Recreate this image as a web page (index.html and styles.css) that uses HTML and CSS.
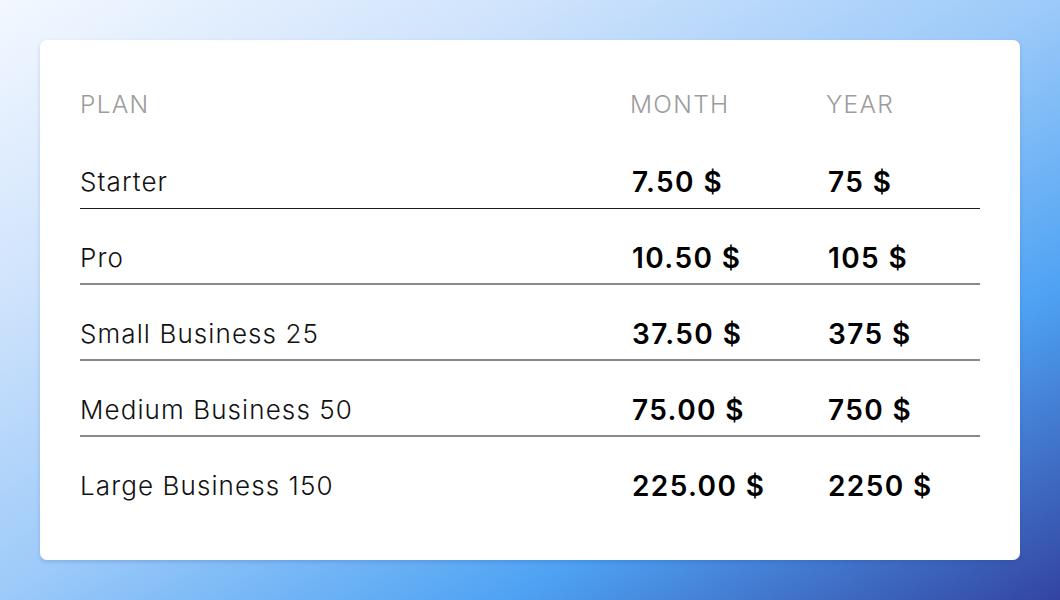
FILE: index.html
```html
<!DOCTYPE html>
<html lang="en">
<head>
<meta charset="utf-8">
<title>Pricing</title>
<link rel="stylesheet" href="styles.css">
</head>
<body>
<div class="card">
  <div class="row head">
    <div class="c plan">PLAN</div>
    <div class="c month">MONTH</div>
    <div class="c year">YEAR</div>
  </div>
  <div class="row first">
    <div class="c plan">Starter</div>
    <div class="c month val">7.50 $</div>
    <div class="c year val">75 $</div>
  </div>
  <div class="row">
    <div class="c plan">Pro</div>
    <div class="c month val">10.50 $</div>
    <div class="c year val">105 $</div>
  </div>
  <div class="row">
    <div class="c plan">Small Business 25</div>
    <div class="c month val">37.50 $</div>
    <div class="c year val">375 $</div>
  </div>
  <div class="row">
    <div class="c plan">Medium Business 50</div>
    <div class="c month val">75.00 $</div>
    <div class="c year val">750 $</div>
  </div>
  <div class="row last">
    <div class="c plan">Large Business 150</div>
    <div class="c month val">225.00 $</div>
    <div class="c year val">2250 $</div>
  </div>
</div>
</body>
</html>
```
FILE: styles.css
```css
html, body {
  margin: 0;
  height: 100%;
}
body {
  width: 1060px;
  height: 600px;
  padding: 40px;
  box-sizing: border-box;
  font-family: "Inter", "Noto Sans", sans-serif;
  background: linear-gradient(to bottom right, #f3f8ff 0%, #cfe3fc 25%, #9ccaf9 50%, #4ea2f3 74%, #3344a0 100%);
}
.card {
  background: #fff;
  border-radius: 7px;
  box-shadow: 0 2px 4px rgba(30, 60, 140, 0.18);
  padding: 48px 40px 48px;
  height: 520px;
  box-sizing: border-box;
}
.row {
  display: grid;
  grid-template-columns: 550px 196px 1fr;
  padding: 34px 0 10px;
  line-height: 30px;
  border-bottom: 2px solid #8a8a8a;
}
.row.head {
  padding: 1px 0 14px;
  border-bottom: none;
}
.row.first {
  padding-bottom: 11px;
  border-bottom: 1px solid #1a1a1a;
}
.row.last {
  border-bottom: none;
}
.c {
  font-size: 26px;
  font-weight: 320;
  letter-spacing: 1.1px;
  color: #111;
}
.head .c {
  color: #9c9c9c;
  font-size: 24.5px;
  font-weight: 300;
  letter-spacing: 1.3px;
}
.val {
  font-weight: 600;
  color: #000;
  font-size: 28px;
  letter-spacing: 1.4px;
  padding-left: 2px;
}
```
